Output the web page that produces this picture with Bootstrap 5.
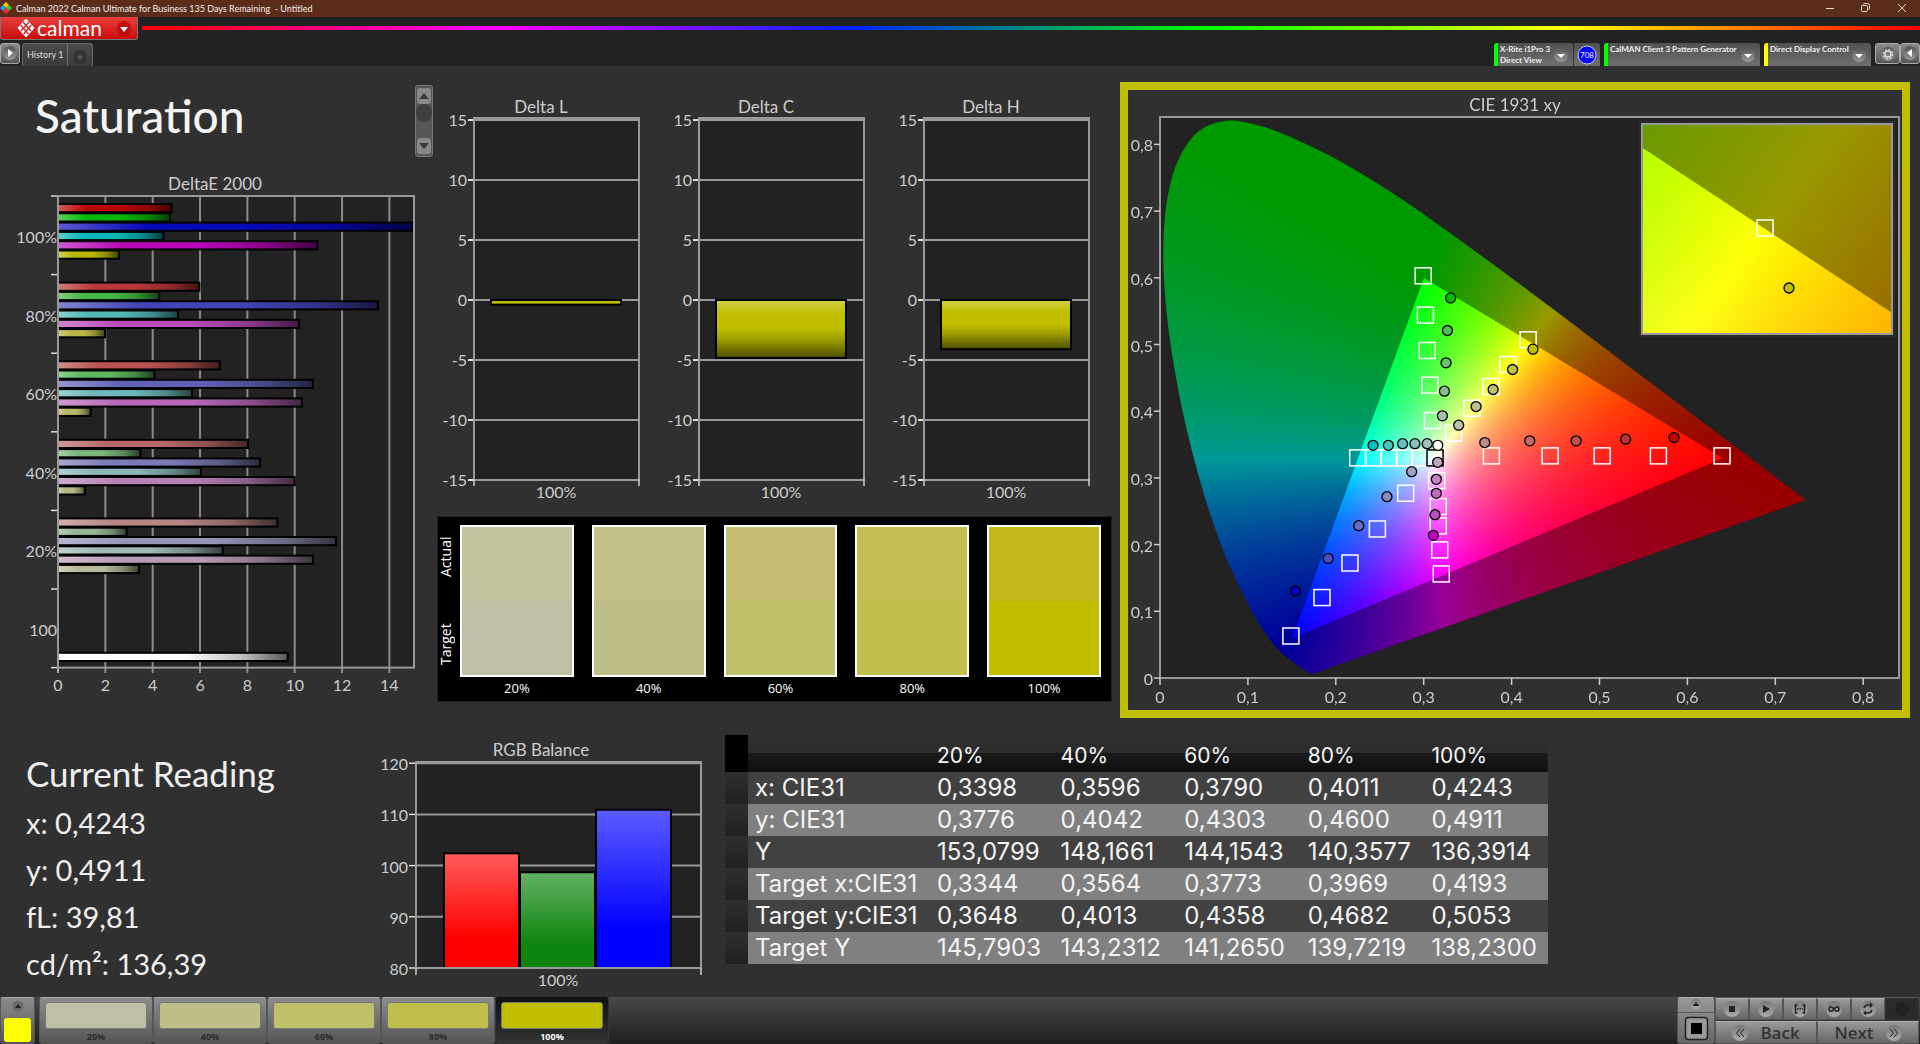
<!DOCTYPE html>
<html lang="en">
<head>
<meta charset="utf-8">
<meta name="viewport" content="width=device-width, initial-scale=1">
<title>Calman 2022 - Untitled</title>
<link rel="stylesheet" href="https://cdn.jsdelivr.net/npm/bootstrap@5.3.0/dist/css/bootstrap.min.css">
<style>
body{background:#303030;color:#eee;font-family:Lato,"Open Sans",sans-serif;line-height:1.2}
button{font-family:inherit}
svg{display:block}
.titlebar{height:17px;background:#5b2c1a;color:#f6efec;font-size:9px;line-height:17px}
.winbtn{width:36px;height:17px;padding:0;border:0;background:none;color:#e8dcd8}
.apphead{background:#222;height:49px}
.brandbtn{width:138px;height:23px;padding:0 6px 0 16px;border:1px solid #777;border-width:0 1px 1px;border-radius:0 0 3px 3px;background:linear-gradient(#e8403c,#c80c0c);color:#fff;font-size:21px;line-height:20px}
.brandbtn span{margin-left:2px}
.spectrum{height:4px;margin:9px 0 0 4px;background:linear-gradient(90deg,#f00,#f0f 20%,#02f 40%,#0f0 60%,#ff0 80%,#f00)}
.sidebtn{width:25px;height:21px;padding:0;border:1px solid #aaa;border-radius:3px;background:linear-gradient(#8a8a8a,#555)}
.sidebtn.edge{width:20px}
.histtab{height:23px;margin-left:2px;border:1px solid #666;border-bottom:0;border-radius:3px 3px 0 0;background:linear-gradient(#4a4a4a,#3a3a3a);color:#ddd;font-size:9px}
.histtab button{height:22px;padding:0 4px;border:0;background:none;color:inherit}
.devtab{height:23px;padding:1px 4px 0 2px;border:0;border-left:4px solid #0f0;border-radius:3px 3px 0 0;background:linear-gradient(#505050,#707070);color:#eee;font-size:8px;font-weight:700;line-height:11px;text-align:left}
.devtab.idle{border-left-color:#ff0;min-width:107px}
.devtab.meter{min-width:80px;border-right:1px solid #333}
.devtab.source{min-width:156px}
.devtab.mode{padding:1px 2px 0;border:0;border-radius:0 3px 0 0}
.toprow{display:grid;grid-template-columns:430fr 690fr 800fr}
.bottomrow{display:grid;grid-template-columns:370fr 355fr 823fr 372fr}
.headrow{padding:22px 0 0 35px;margin-bottom:31px;height:109px;margin-bottom:0}
.pagetitle{font-size:46px;line-height:56px;color:#f4f4f4}
.scroller{width:18px;height:72px;padding:2px;margin:-3px -3px 0 0;border:1px solid #777;border-radius:3px;background:#555}
.scroller button{width:14px;height:16px;padding:0;border:0;border-radius:3px;background:#888}
.scroller i{width:16px;height:18px;margin-bottom:16px;border-radius:8px;background:#3f3f3f}
.trio{padding:14px 15px 0 0}
.chart{width:100%;height:auto}
.chart text{font-size:16px;fill:#ccc}
.chart .ttl{font-size:17px}
.compare{height:186px;margin:6px 8px 0 7px;padding:8px 10px 0 0;background:#000;color:#fff;font:13px/16px "Open Sans",sans-serif;border:1px solid #222}
.sidelabel{width:22px;height:152px;padding:12px 0;font-size:14px;writing-mode:vertical-rl;transform:rotate(180deg)}
.pairs{display:grid;grid-template-columns:repeat(5,1fr);column-gap:18px}
.pair{height:152px;margin-bottom:3px;border:2px solid #fff}
.ciepanel{margin:16px 10px 4px 0;border:8px solid #bfbf00;background:#303030}
.stack{display:grid}
.stack>*{grid-area:1/1;width:100%;height:auto}
.reading{padding:30px 0 0 26px}
.reading h2{font-size:35px;line-height:42px;margin-bottom:11px}
.reading p{font-size:29px;line-height:35px;margin:0 0 12px}
.tablecell{padding-top:13px}
.vals{--bs-table-bg:transparent;--bs-table-color:#f4f4f4;table-layout:fixed;font:24px/24px Inter,"Noto Sans",sans-serif;color:#f4f4f4;margin:0}
.vals>:not(caption)>*>*{padding:4px 0 4px 7px;border:0;box-shadow:none;color:inherit;background:none;white-space:nowrap;font-weight:400}
.vals thead tr{height:37px;background:linear-gradient(#303030,#2b2b2b 50%,#1a1a1a 50%,#0e0e0e);font-size:21px}
.vals tbody tr{background:#414141}
.vals tbody tr:nth-child(even){background:#808080}
.vals tbody td:first-child{background:linear-gradient(#303030,#202020)}
.vals thead td:first-child{background:#000}
.footbar{height:47px;background:linear-gradient(#484848,#1f1f1f)}
.padbtn{height:47px;padding:4px 5px 0;border:1px solid #555;border-top-color:#aaa;border-radius:3px;background:linear-gradient(#8c8c8c,#555);color:#2b2b2b;font:bold 9px/15px "Open Sans",sans-serif}
.padbtn span{display:block;width:102px;height:27px;border:1px solid #777;border-radius:3px}
.padbtn.sel{background:linear-gradient(#111,#333);border-color:#111 #333 #333;color:#fff}
.palette{width:35px;height:47px;padding:1px 3px;margin-right:4px}
.palette i{display:block;width:27px;height:24px;margin-top:6px;border-radius:3px;background:#ff0}
.navpad{display:grid;grid-template-columns:repeat(6,34px);grid-template-rows:22px 23px;row-gap:1px;margin-right:1px;border-top:1px solid #555}
.navpad button,.stopcol{padding:0;border:1px solid #555;border-top-color:#b0b0b0;background:linear-gradient(#999,#666);color:#333}
.navpad .wide{grid-column:span 3;font:600 17px/20px "Open Sans",sans-serif}
.navpad .off{background:#2a2a2a;border-color:#333}
.stopcol{width:38px;height:47px;border-radius:3px}
</style>
<script src="https://cdn.jsdelivr.net/npm/bootstrap@5.3.0/dist/js/bootstrap.bundle.min.js"></script>
</head>
<body class="d-flex flex-column min-vh-100">
<svg width="0" height="0" class="position-absolute" aria-hidden="true">
  <defs>
    <linearGradient id="disc" x2="0" y2="1"><stop stop-color="#555"/><stop offset="1" stop-color="#999"/></linearGradient>
    <linearGradient id="knob" x2="0" y2="1"><stop stop-color="#777"/><stop offset="1" stop-color="#aaa"/></linearGradient>
    <linearGradient id="shadeH"><stop stop-color="#fff" stop-opacity=".34"/><stop offset=".25" stop-color="#fff" stop-opacity="0"/><stop offset=".55" stop-color="#000" stop-opacity="0"/><stop offset=".8" stop-color="#000" stop-opacity=".25"/><stop offset="1" stop-color="#000" stop-opacity=".65"/></linearGradient>
    <linearGradient id="shadeV" x2="0" y2="1"><stop stop-color="#fff" stop-opacity=".3"/><stop offset=".25" stop-color="#fff" stop-opacity="0"/><stop offset=".5" stop-color="#000" stop-opacity="0"/><stop offset=".7" stop-color="#000" stop-opacity=".2"/><stop offset="1" stop-color="#000" stop-opacity=".6"/></linearGradient>
    <linearGradient id="fadeV" x2="0" y2="1"><stop stop-color="#fff" stop-opacity=".36"/><stop offset=".75" stop-color="#fff" stop-opacity="0"/></linearGradient>
  </defs>
</svg>

<div class="titlebar d-flex">
  <svg class="me-1" width="12" height="17" viewBox="0 0 12 17"><g transform="translate(0 2)"><path d="M6 0l3 3-3 3-3-3z" fill="#fc0"/><path d="M3 3l3 3-3 3-3-3z" fill="#39d"/><path d="M9 3l3 3-3 3-3-3z" fill="#3c2"/><path d="M6 6l3 3-3 3-3-3z" fill="#f24"/></g></svg>
  <span class="flex-grow-1">Calman 2022 Calman Ultimate for Business 135 Days Remaining&nbsp; - Untitled</span>
  <button class="winbtn" aria-label="Minimize"><svg width="36" height="17"><path d="M14 8.500h8" stroke="currentColor"/></svg></button>
  <button class="winbtn" aria-label="Restore"><svg width="36" height="17" fill="none" stroke="currentColor"><rect x="13.500" y="5.500" width="6" height="6" rx="1"/><path d="M15.500 4.500q0-1 1-1h3q2 0 2 2v3q0 1-1 1"/></svg></button>
  <button class="winbtn" aria-label="Close"><svg width="36" height="17"><path d="M14 4l8 8m0-8l-8 8" stroke="currentColor"/></svg></button>
</div>

<header class="apphead d-flex flex-column justify-content-between">
  <div class="d-flex">
    <button class="brandbtn d-flex align-items-center">
      <svg width="18" height="20" viewBox="0 0 18 20"><path d="M9 1l8 9-8 9-8-9z" fill="#fff" stroke="#fff" stroke-linejoin="round"/><path d="M3.500 7l8 9M6 4l8 9M14.500 7l-8 9M12 4l-8 9" stroke="#d42420" stroke-width="1.300"/></svg>
      <span>calman</span>
      <svg class="ms-auto" width="14" height="20"><ellipse cx="7" cy="11" rx="7" ry="8" fill="#c00d10"/><path d="M3 9h8l-4 5z" fill="#fff"/></svg>
    </button>
    <div class="spectrum flex-grow-1"></div>
  </div>
  <div class="d-flex">
    <button class="sidebtn edge" aria-label="Expand"><svg width="18" height="19"><circle cx="9" cy="9" r="7" fill="url(#disc)"/><path d="M7 5l5 4-5 4z" fill="#fff"/></svg></button>
    <div class="histtab d-flex">
      <button>History 1</button>
      <button class="border-start border-secondary" aria-label="Add tab"><svg width="16" height="20"><circle cx="8" cy="12" r="7" fill="#333"/><path d="M5.500 12h5M8 9.500v5" stroke="#777"/></svg></button>
    </div>
    <div class="ms-auto d-flex">
      <div class="d-flex me-1">
        <button class="devtab meter d-flex justify-content-between">
          <span>X-Rite i1Pro 3<br>Direct View</span>
          <svg width="16" height="22"><circle cx="8" cy="11" r="7" fill="url(#disc)"/><path d="M4 10h8l-4 4z" fill="#fff"/></svg>
        </button>
        <span class="devtab mode"><svg width="22" height="21"><circle cx="11" cy="11" r="9" fill="#00f" stroke="#ccd"/><text x="11" y="14" font-size="8" font-weight="400" fill="#fff" text-anchor="middle">708</text></svg></span>
      </div>
      <button class="devtab source d-flex justify-content-between me-1">
        <span>CalMAN Client 3 Pattern Generator</span>
        <svg width="16" height="22"><circle cx="8" cy="11" r="7" fill="url(#disc)"/><path d="M4 10h8l-4 4z" fill="#fff"/></svg>
      </button>
      <button class="devtab idle d-flex justify-content-between">
        <span>Direct Display Control</span>
        <svg width="16" height="22"><circle cx="8" cy="11" r="7" fill="url(#disc)"/><path d="M4 10h8l-4 4z" fill="#fff"/></svg>
      </button>
      <button class="sidebtn ms-1" aria-label="Settings"><svg width="23" height="19"><circle cx="12" cy="10" r="7" fill="url(#disc)"/><circle cx="12" cy="10" r="3" fill="none" stroke="#ddd" stroke-width="1.500"/><circle cx="12" cy="10" r="4.500" fill="none" stroke="#ddd" stroke-width="1.500" stroke-dasharray="1.760"/></svg></button>
      <button class="sidebtn edge" aria-label="Collapse"><svg width="18" height="19"><circle cx="9" cy="9" r="7" fill="url(#disc)"/><path d="M11 5l-5 4 5 4z" fill="#fff"/></svg></button>
    </div>
  </div>
</header>

<main>
  <div class="toprow">
    <section>
      <div class="headrow d-flex justify-content-between align-items-start">
        <h1 class="pagetitle mb-0">Saturation</h1>
        <div class="scroller d-flex flex-column align-items-center justify-content-between">
          <button aria-label="Up"><svg width="14" height="16"><path d="M2 11h10L7 5z" fill="#3a3a3a"/></svg></button>
          <i></i>
          <button aria-label="Down"><svg width="14" height="16"><path d="M2 5h10l-5 6z" fill="#3a3a3a"/></svg></button>
        </div>
      </div>
      <svg class="chart" id="deltaE" viewBox="0 0 430 530" role="img" aria-label="DeltaE 2000"></svg>
    </section>
    <section>
      <div class="trio d-flex">
        <svg class="chart" id="dL" viewBox="0 0 225 430" role="img" aria-label="Delta L"></svg>
        <svg class="chart" id="dC" viewBox="0 0 225 430" role="img" aria-label="Delta C"></svg>
        <svg class="chart" id="dH" viewBox="0 0 225 430" role="img" aria-label="Delta H"></svg>
      </div>
      <div class="compare d-flex">
        <div class="sidelabel d-flex justify-content-between"><span>Target</span><span>Actual</span></div>
        <div class="pairs flex-grow-1 text-center" id="pairs"></div>
      </div>
    </section>
    <section>
      <div class="ciepanel stack">
        <canvas id="cieFill" width="1548" height="1240"></canvas>
        <svg class="chart" id="cie" viewBox="0 0 774 620" role="img" aria-label="CIE 1931 xy"></svg>
      </div>
    </section>
  </div>

  <div class="bottomrow">
    <section class="reading">
      <h2 class="fw-normal">Current Reading</h2>
      <p>x: 0,4243</p><p>y: 0,4911</p><p>fL: 39,81</p><p class="mb-0">cd/m²: 136,39</p>
    </section>
    <section class="pt-2"><svg class="chart" id="rgb" viewBox="0 0 355 264" role="img" aria-label="RGB Balance"></svg></section>
    <section class="tablecell">
      <table class="table vals">
        <colgroup><col style="width:23px"><col style="width:182px"><col><col><col><col><col></colgroup>
        <thead><tr><td></td><th></th><th scope="col">20%</th><th scope="col">40%</th><th scope="col">60%</th><th scope="col">80%</th><th scope="col">100%</th></tr></thead>
        <tbody>
          <tr><td></td><th scope="row">x: CIE31</th><td>0,3398</td><td>0,3596</td><td>0,3790</td><td>0,4011</td><td>0,4243</td></tr>
          <tr><td></td><th scope="row">y: CIE31</th><td>0,3776</td><td>0,4042</td><td>0,4303</td><td>0,4600</td><td>0,4911</td></tr>
          <tr><td></td><th scope="row">Y</th><td>153,0799</td><td>148,1661</td><td>144,1543</td><td>140,3577</td><td>136,3914</td></tr>
          <tr><td></td><th scope="row">Target x:CIE31</th><td>0,3344</td><td>0,3564</td><td>0,3773</td><td>0,3969</td><td>0,4193</td></tr>
          <tr><td></td><th scope="row">Target y:CIE31</th><td>0,3648</td><td>0,4013</td><td>0,4358</td><td>0,4682</td><td>0,5053</td></tr>
          <tr><td></td><th scope="row">Target Y</th><td>145,7903</td><td>143,2312</td><td>141,2650</td><td>139,7219</td><td>138,2300</td></tr>
        </tbody>
      </table>
    </section>
  </div>
</main>

<footer class="footbar d-flex mt-auto">
  <button class="padbtn palette" aria-label="Palette"><svg class="mx-auto" width="14" height="12"><circle cx="7" cy="6" r="5.500" fill="#6a6a6a"/><path d="M4 8h6L7 4z" fill="#222"/></svg><i></i></button>
  <div class="d-flex gap-0" id="pads"></div>
  <div class="ms-auto d-flex">
    <button class="stopcol" aria-label="Stop all"><svg width="36" height="45"><circle cx="18" cy="6" r="5.500" fill="url(#knob)"/><path d="M14.500 8h7L18 4z" fill="#222"/><path d="M0 14.500h36" stroke="#555"/><rect x="7.500" y="19.500" width="22" height="22" rx="3" fill="#999" stroke="#222" stroke-width="1.500"/><rect x="13" y="25" width="11" height="11" fill="#000"/></svg></button>
    <div class="navpad">
      <button aria-label="Stop"><svg width="32" height="20"><circle cx="16" cy="10" r="8" fill="url(#knob)"/><rect x="13" y="7" width="6" height="6" fill="#222"/></svg></button>
      <button aria-label="Play"><svg width="32" height="20"><circle cx="16" cy="10" r="8" fill="url(#knob)"/><path d="M13 6l7 4-7 4z" fill="#222"/></svg></button>
      <button aria-label="Series"><svg width="32" height="20"><circle cx="16" cy="10" r="8" fill="url(#knob)"/><path d="M13.500 6h-2v8h2M18.500 6h2v8h-2" fill="none" stroke="#222" stroke-width="1.500"/><path d="M13 10h6" stroke="#222" stroke-width="1.500" stroke-dasharray="1.500 1"/></svg></button>
      <button aria-label="Continuous"><svg width="32" height="20"><circle cx="16" cy="10" r="8" fill="url(#knob)"/><path d="M16 10c-2-3-5-3-5 0s3 3 5 0 5-3 5 0-3 3-5 0z" fill="none" stroke="#222" stroke-width="1.500"/></svg></button>
      <button aria-label="Refresh"><svg width="32" height="20"><circle cx="16" cy="10" r="8" fill="url(#knob)"/><path d="M12 9q1-3 4-3h2M20 11q-1 3-4 3h-2" fill="none" stroke="#222" stroke-width="1.500"/><path d="M18 3.500l3 2.500-3 3zM14 11.500l-3 2.500 3 2.500z" fill="#222"/></svg></button>
      <button class="off" disabled aria-label="Empty"><svg width="32" height="20"><circle cx="16" cy="10" r="7" fill="#222"/></svg></button>
      <button class="wide d-flex align-items-center justify-content-center gap-2"><svg width="20" height="16"><circle cx="8" cy="8" r="8" fill="url(#knob)"/><path d="M8 4L4.500 8 8 12M12 4L8.500 8l3.500 4" fill="none" stroke="#222"/></svg>Back</button>
      <button class="wide d-flex align-items-center justify-content-center gap-2">Next<svg width="20" height="16"><circle cx="12" cy="8" r="8" fill="url(#knob)"/><path d="M8 4l3.500 4L8 12M12 4l3.500 4-3.500 4" fill="none" stroke="#222"/></svg></button>
    </div>
  </div>
</footer>

<script>
const levels = ['20%', '40%', '60%', '80%', '100%'];
const line = (x1, y1, x2, y2, c = '#999', w = 1.5) => `<path d="M${x1} ${y1}L${x2} ${y2}" stroke="${c}" stroke-width="${w}"/>`;
const label = (x, y, s, a = 'middle', k = '') => `<text x="${x}" y="${y}" text-anchor="${a}" class="${k}">${s}</text>`;
const frame = (x, y, w, h) => `<rect x="${x}" y="${y}" width="${w}" height="${h}" fill="none" stroke="#999" stroke-width="2"/>`;
const bar = (x, y, w, h, c, g) => `<rect x="${x}" y="${y}" width="${w}" height="${h}" fill="${c}"/><rect x="${x}" y="${y}" width="${w}" height="${h}" fill="url(#${g})" stroke="#000" stroke-width="2"/>`;
const put = (id, s) => document.getElementById(id).innerHTML = s;

/* DeltaE 2000, grouped horizontal bars */
(function () {
  const x0 = 58, k = 23.67, y0 = 21, step = 78.6;
  const colours = [
    ['#bb0606', '#08b808', '#0808bb', '#08b8b8', '#b808b8', '#b8b808'],
    ['#bb3838', '#43b843', '#4444b8', '#52b8b8', '#b84cb8', '#b8b84a'],
    ['#b95252', '#5fb75f', '#6161b8', '#70b8b8', '#b867b8', '#b8b86b'],
    ['#b76868', '#7ab57a', '#7a7ab5', '#8ab8b8', '#b880b5', '#b8b883'],
    ['#b98686', '#95b595', '#9494b5', '#a0b8b8', '#b89ab5', '#b8b89c'],
    [,,,,,, '#fff']];
  const data = [
    [4.8, 4.73, 15, 4.46, 10.96, 2.58], [5.97, 4.28, 13.52, 5.07, 10.18, 1.99],
    [6.84, 4.07, 10.77, 5.66, 10.31, 1.38], [8.03, 3.48, 8.53, 6.04, 10, 1.14],
    [9.27, 2.9, 11.74, 6.96, 10.77, 3.42], [,,,,,, 9.7]];
  const names = ['100%', '80%', '60%', '40%', '20%', '100'];
  let s = label(215, 15, 'DeltaE 2000', 'middle', 'ttl') + `<rect x="58" y="21" width="355" height="471" fill="#222"/>`;
  for (let v = 0; v < 15; v += 2) {
    s += line(x0 + v * k, 21, x0 + v * k, 498, v ? '#8a8a8a' : '#aaa', 2);
    s += label(x0 + v * k, 516, v);
  }
  data.forEach((row, g) => {
    s += label(57, y0 + g * step + 47, names[g], 'end');
    row.forEach((v, i) => s += bar(x0, y0 + g * step + 8 + i * 9.3, v * k, 8.2, colours[g][i], 'shadeH'));
  });
  for (let g = 0; g < 7; g++) s += line(51, y0 + g * step, 58, y0 + g * step, '#ddd');
  put('deltaE', s + frame(58, 21, 356, 471.6));
})();

/* Delta L, C and H */
[['dL', 'Delta L', -.4], ['dC', 'Delta C', -4.83], ['dH', 'Delta H', -4.1]].forEach(([id, name, v]) => {
  let s = label(111, 33, name, 'middle', 'ttl') + '<rect x="44" y="38" width="165" height="361" fill="#222"/>';
  for (let t = 15; t >= -15; t -= 5) {
    const y = 220 - t * 12;
    s += line(44, y, 209, y, '#999', 2) + line(38, y, 44, y, '#ddd', 2) + label(37, y + 6, t, 'end');
  }
  s += frame(44, 38, 165, 362) + line(44, 399, 44, 406, '#ccc') + line(209, 399, 209, 406, '#ccc');
  s += bar(61, 220, 130, -v * 12, '#bfbf00', 'shadeV') + label(126, 418, '100%');
  put(id, s);
});

/* RGB balance */
(function () {
  let s = label(171, 26, 'RGB Balance', 'middle', 'ttl') + '<rect x="46" y="32" width="285" height="206" fill="#222"/>';
  for (let t = 80; t <= 120; t += 10) {
    const y = 238 - (t - 80) * 5.12;
    s += line(46, y, 331, y, '#999', 2) + line(39, y, 46, y, '#ddd') + label(38, y + 7, t, 'end');
  }
  s += frame(46, 32, 285, 206);
  [['#ff0000', 102.4], ['#0f850f', 98.7], ['#0000ff', 110.9]].forEach(([c, v], i) => {
    const h = (v - 80) * 5.12;
    s += bar(74 + i * 76, 238 - h, 75, h, c, 'fadeV');
  });
  s += line(46, 238, 331, 238, '#999', 2) + line(46, 238, 46, 245, '#ccc') + line(331, 238, 331, 245, '#ccc');
  put('rgb', s + label(188, 256, '100%'));
})();

/* Swatches: measured above, target below */
const target = ['#bfbfa6', '#bfbf88', '#bfbf6c', '#bfbf4c', '#bfbf00'];
const actual = ['#c2c49f', '#c2c187', '#c4bf72', '#c4bd52', '#c4b91c'];
put('pairs', levels.map((n, i) => `<div><div class="pair" style="background:linear-gradient(${actual[i]} 50%,${target[i]} 50%)"></div>${n}</div>`).join(''));
put('pads', levels.map((n, i) => `<button class="padbtn${i == 4 ? ' sel' : ''}"><span style="background:${target[i]}"></span>${n}</button>`).join(''));

/* CIE 1931 chromaticity diagram */
const X = v => 32 + v * 879, Y = v => 588 - v * 667;
const locus = [[.1741,.005],[.1714,.0051],[.1689,.0069],[.1644,.0109],[.1566,.0177],[.144,.0297],[.1355,.0399],[.1241,.0578],[.1096,.0868],[.0913,.1327],[.0687,.2007],[.0454,.295],[.0235,.4127],[.0082,.5384],[.0039,.6548],[.0139,.7502],[.0389,.812],[.0743,.8338],[.1142,.8262],[.1547,.8059],[.1929,.7816],[.2296,.7543],[.2658,.7243],[.3016,.6923],[.3731,.6245],[.4441,.5547],[.5125,.4866],[.5752,.4242],[.627,.3725],[.6915,.3083],[.7347,.2653]];
function chroma(x, y) {
  const z = 1 - x - y;
  const c = [3.2406 * x - 1.5372 * y - .4986 * z, -.9689 * x + 1.8758 * y + .0415 * z, .0557 * x - .204 * y + 1.057 * z];
  const out = Math.min(...c) < 0, m = Math.max(...c);
  return c.map(v => Math.max(0, v) / m * (out ? 153 : 255));
}
function field(w, h, fx, fy) {
  const cv = document.createElement('canvas');
  cv.width = w; cv.height = h;
  const g = cv.getContext('2d'), im = g.createImageData(w, h);
  for (let j = 0, p = 0; j < h; j++) for (let i = 0; i < w; i++, p += 4) {
    const c = chroma(fx(i), fy(j));
    im.data[p] = c[0]; im.data[p + 1] = c[1]; im.data[p + 2] = c[2]; im.data[p + 3] = 255;
  }
  g.putImageData(im, 0, 0);
  return cv;
}
(function () {
  const g = document.getElementById('cieFill').getContext('2d');
  g.fillStyle = '#222';
  g.fillRect(64, 54, 1478, 1122);
  g.save();
  g.scale(2, 2);
  g.beginPath();
  const P = locus.map(([x, y]) => [X(x), Y(y) - 1]), n = P.length;
  g.moveTo(...P[0]);
  for (let i = 0; i < n - 1; i++) {
    const a = P[Math.max(0, i - 1)], b = P[i], c = P[i + 1], d = P[Math.min(n - 1, i + 2)];
    g.bezierCurveTo(b[0] + (c[0] - a[0]) / 6, b[1] + (c[1] - a[1]) / 6, c[0] - (d[0] - b[0]) / 6, c[1] - (d[1] - b[1]) / 6, c[0], c[1]);
  }
  g.closePath();
  g.clip();
  g.drawImage(field(1548, 1240, i => (i / 2 - 32) / 879, j => (588 - j / 2) / 667), 0, 0, 774, 620);
  g.restore();
  g.fillStyle = '#2b2b2b';
  g.fillRect(1022, 62, 512, 432);
  g.drawImage(field(500, 420, i => .4193 + (i / 2 - 122) / 4920, j => .5053 - (j / 2 - 104) / 4100), 1028, 68);
})();
(function () {
  const box = (x, y, c = '#fff') => `<rect x="${x - 8}" y="${y - 8}" width="16" height="16" fill="none" stroke="${c}" stroke-width="1.500"/>`;
  const dot = (x, y, c) => `<circle cx="${x}" cy="${y}" r="5" fill="${c}" stroke="#000" stroke-width="1.300"/>`;
  let s = label(387, 21, 'CIE 1931 xy', 'middle', 'ttl') + frame(32, 27, 739, 561) + frame(514, 34, 250, 210);
  for (let i = 0; i < 9; i++) {
    const t = i ? '0,' + i : '0';
    s += line(X(i / 10), 588, X(i / 10), 595, '#ccc') + label(X(i / 10), 613, t);
    s += line(26, Y(i / 10), 32, Y(i / 10), '#ccc') + label(25, Y(i / 10) + 7, t, 'end');
  }
  const targets = [[.2994,.603],[.302,.544],[.304,.491],[.307,.439],[.31,.386],[.4188,.507],[.3956,.47],[.3764,.437],[.355,.4045],[.334,.367],[.377,.333],[.4438,.333],[.503,.333],[.567,.333],[.6394,.333],[.2249,.33],[.2429,.33],[.2605,.33],[.2782,.33],[.2958,.33],[.3147,.296],[.3166,.257],[.3166,.228],[.3182,.192],[.32,.156],[.2795,.277],[.2473,.2234],[.2161,.1724],[.1843,.1206],[.1489,.063]];
  targets.forEach(([x, y]) => s += box(X(x), Y(y)));
  s += box(X(.3129), Y(.33), '#000');
  const reads = {
    '#00bf00 #4cbf4c #6cbf6c #88bf88 #a6bfa6': [[.3306,.5698],[.327,.521],[.3254,.4725],[.3236,.43],[.3213,.393]],
    '#bfbf00 #bfbf4c #bfbf6c #bfbf88 #bfbfa6': [[.4243,.493],[.4011,.4625],[.379,.4325],[.3596,.407],[.3398,.379]],
    '#bf0000 #bf3333 #bf5050 #bf6a6a #bf8c8c': [[.5848,.3605],[.5297,.358],[.4734,.3556],[.4206,.3556],[.3695,.353]],
    '#00bfbf #4cbfbf #6cbfbf #88bfbf #a6bfbf': [[.2424,.3488],[.2598,.3488],[.276,.3513],[.29,.3513],[.304,.3513]],
    '#bf00bf #bf4cbf #bf6cbf #bf88bf #bfa6bf': [[.311,.2139],[.3129,.2448],[.3144,.2769],[.3144,.2979],[.3159,.3234]],
    '#0000bf #4c4cbf #6c6cbf #8888bf #a0a0bf': [[.1541,.1304],[.1913,.1793],[.2261,.2283],[.2582,.2718],[.2863,.3093]]
  };
  for (const key in reads) key.split(' ').forEach((c, i) => s += dot(X(reads[key][i][0]), Y(reads[key][i][1]), c));
  s += dot(X(.316), Y(.3488), '#fff');
  s += box(637, 138) + dot(661, 198, '#bfbf00');
  put('cie', s);
})();
</script>
</body>
</html>
